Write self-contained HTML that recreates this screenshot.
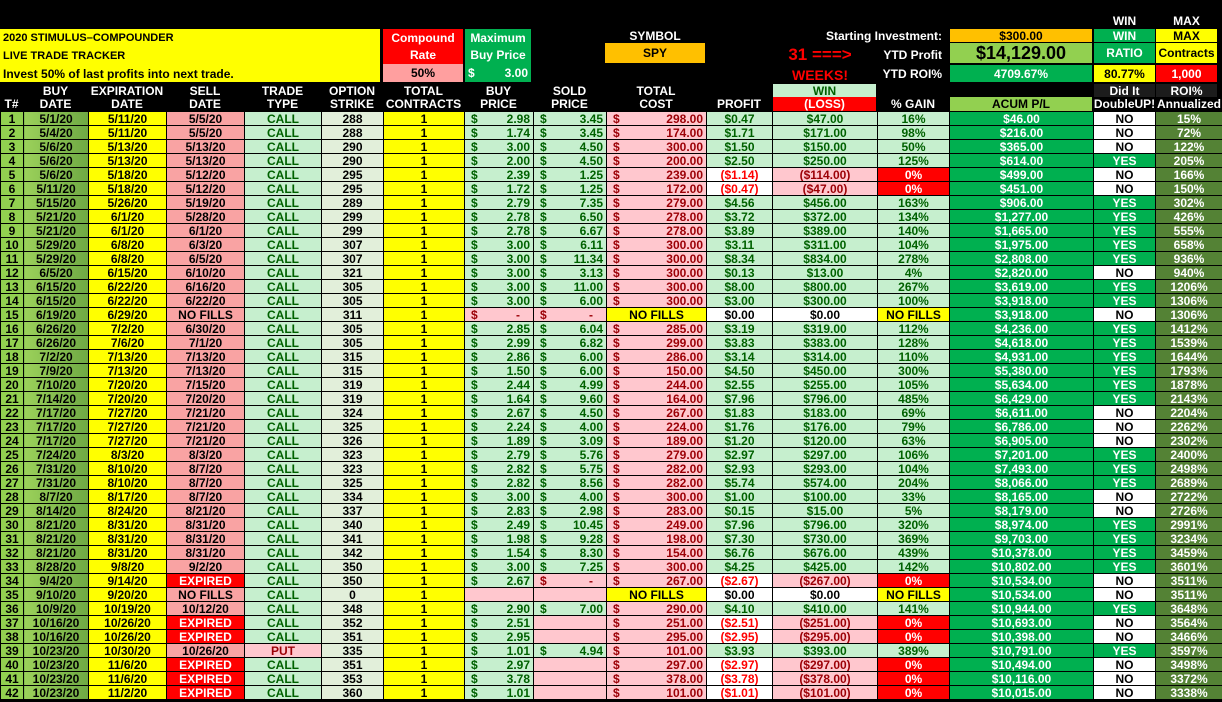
<!DOCTYPE html>
<html><head><meta charset="utf-8"><style>
*{box-sizing:border-box;margin:0;padding:0}
body{width:1222px;height:702px;background:#000;overflow:hidden;position:relative;font-family:"Liberation Sans Narrow","Liberation Sans",sans-serif;font-weight:bold;font-size:12px;color:#000}
.a{position:absolute;display:flex;align-items:center;justify-content:center;white-space:nowrap}
.w{color:#fff}
table{position:absolute;left:0;top:111px;border-collapse:collapse;table-layout:fixed;width:1222px}
td{height:14px;padding:0 3px;border:1px solid #000;text-align:center;line-height:12px;white-space:nowrap;overflow:hidden;font-size:12px}
td i{font-style:normal;float:left;padding-left:3px}
.n{background:#92d050}
.bd{background:linear-gradient(90deg,#9bd15a,#6fa944)}
.ex,.tc{background:#ffff00}
.sd{background:#f9a3a3}
.xp{background:#ff0000;color:#fff}
.ty{background:#c6efce;color:#006100}
.pt{background:#ffc7ce;color:#9c0006}
.st{background:#e2efda}
.g{background:#c6efce;color:#006100;text-align:right}
.gp{background:#ffc7ce;color:#9c0006;text-align:right}
.r{background:#ffc7ce;color:#9c0006;text-align:right}
.pf,.wn,.pg{background:#c6efce;color:#006100}
.np{background:#fff;color:#f00}
.nw{background:#ffc7ce;color:#9c0006}
.z{background:#f00;color:#fff}
.wh{background:#fff;color:#000}
.yf{background:#ffff00;color:#000}
.ac{background:#00b050;color:#fff}
.no{background:#fff}
.ye{background:#00b050;color:#fff}
.roi{background:#548235;color:#fff}
</style></head><body>
<div style="position:absolute;left:0;top:29px;width:380px;height:53px;background:#ffff00"></div>
<div class="a" style="left:3px;top:29px;height:18px;justify-content:flex-start;font-size:11px">2020 STIMULUS–COMPOUNDER</div>
<div class="a" style="left:3px;top:47px;height:18px;justify-content:flex-start;font-size:11px">LIVE TRADE TRACKER</div>
<div class="a" style="left:3px;top:66px;height:16px;justify-content:flex-start;font-size:12px">Invest 50% of last profits into next trade.</div>
<div class="a w" style="left:383px;top:29px;width:80px;height:35px;background:#f00;flex-direction:column;justify-content:space-around">Compound<span>Rate</span></div>
<div class="a" style="left:383px;top:64px;width:80px;height:18px;background:#ff9f9f">50%</div>
<div class="a w" style="left:465px;top:29px;width:66px;height:53px;background:#00b050;flex-direction:column;justify-content:space-around"><span>Maximum</span><span>Buy Price</span><span style="width:60px;display:flex;justify-content:space-between"><span>$</span><span>3.00</span></span></div>
<div class="a w" style="left:605px;top:29px;width:100px;height:14px">SYMBOL</div>
<div class="a" style="left:605px;top:43px;width:100px;height:20px;background:#ffc000">SPY</div>
<div class="a" style="left:770px;top:45px;width:100px;height:20px;color:#f00;font-size:17px">31 ===&gt;</div>
<div class="a" style="left:770px;top:66px;width:100px;height:17px;color:#f00;font-size:14px">WEEKS!</div>
<div class="a w" style="left:800px;top:29px;width:142px;height:14px;justify-content:flex-end">Starting Investment:</div>
<div class="a w" style="left:800px;top:45px;width:142px;height:20px;justify-content:flex-end">YTD Profit</div>
<div class="a w" style="left:800px;top:65px;width:142px;height:17px;justify-content:flex-end">YTD ROI%</div>
<div class="a" style="left:950px;top:29px;width:142px;height:13px;background:#ffc000">$300.00</div>
<div class="a" style="left:950px;top:43px;width:142px;height:20px;background:#92d050;font-size:18px">$14,129.00</div>
<div class="a w" style="left:950px;top:65px;width:142px;height:17px;background:#00b050">4709.67%</div>
<div class="a w" style="left:1094px;top:13px;width:61px;height:15px">WIN</div>
<div class="a w" style="left:1156px;top:13px;width:61px;height:15px">MAX</div>
<div class="a w" style="left:1094px;top:29px;width:61px;height:13px;background:#00b050">WIN</div>
<div class="a w" style="left:1094px;top:43px;width:61px;height:20px;background:#00b050">RATIO</div>
<div class="a" style="left:1094px;top:65px;width:61px;height:17px;background:#ffff00">80.77%</div>
<div class="a" style="left:1156px;top:29px;width:61px;height:13px;background:#ffff00">MAX</div>
<div class="a" style="left:1156px;top:43px;width:61px;height:20px;background:#ffff00">Contracts</div>
<div class="a w" style="left:1156px;top:65px;width:61px;height:17px;background:#f00">1,000</div>
<div class="a w" style="left:0;top:97px;width:23px;height:14px">T#</div>
<div class="a w" style="left:23px;top:84px;width:65px;height:27px;flex-direction:column;line-height:13px">BUY<span>DATE</span></div>
<div class="a w" style="left:88px;top:84px;width:78px;height:27px;flex-direction:column;line-height:13px">EXPIRATION<span>DATE</span></div>
<div class="a w" style="left:166px;top:84px;width:78px;height:27px;flex-direction:column;line-height:13px">SELL<span>DATE</span></div>
<div class="a w" style="left:244px;top:84px;width:77px;height:27px;flex-direction:column;line-height:13px">TRADE<span>TYPE</span></div>
<div class="a w" style="left:321px;top:84px;width:62px;height:27px;flex-direction:column;line-height:13px">OPTION<span>STRIKE</span></div>
<div class="a w" style="left:383px;top:84px;width:81px;height:27px;flex-direction:column;line-height:13px">TOTAL<span>CONTRACTS</span></div>
<div class="a w" style="left:464px;top:84px;width:69px;height:27px;flex-direction:column;line-height:13px">BUY<span>PRICE</span></div>
<div class="a w" style="left:533px;top:84px;width:73px;height:27px;flex-direction:column;line-height:13px">SOLD<span>PRICE</span></div>
<div class="a w" style="left:606px;top:84px;width:100px;height:27px;flex-direction:column;line-height:13px">TOTAL<span>COST</span></div>
<div class="a w" style="left:706px;top:97px;width:66px;height:14px">PROFIT</div>
<div class="a" style="left:773px;top:84px;width:103px;height:13px;background:#c6efce;color:#006100">WIN</div>
<div class="a w" style="left:773px;top:97px;width:103px;height:14px;background:#f00">(LOSS)</div>
<div class="a w" style="left:877px;top:97px;width:72px;height:14px">% GAIN</div>
<div class="a" style="left:950px;top:97px;width:142px;height:14px;background:#92d050">ACUM P/L</div>
<div class="a w" style="left:1094px;top:84px;width:61px;height:13px;background:#1c1c1c">Did It</div>
<div class="a w" style="left:1094px;top:97px;width:61px;height:14px">DoubleUP!</div>
<div class="a w" style="left:1156px;top:84px;width:61px;height:13px;background:#1c1c1c">ROI%</div>
<div class="a w" style="left:1156px;top:97px;width:66px;height:14px">Annualized</div>
<table>
<colgroup><col style="width:23px"><col style="width:65px"><col style="width:78px"><col style="width:78px"><col style="width:77px"><col style="width:62px"><col style="width:81px"><col style="width:69px"><col style="width:73px"><col style="width:100px"><col style="width:66px"><col style="width:105px"><col style="width:72px"><col style="width:144px"><col style="width:62px"><col style="width:67px"></colgroup>
<tr><td class="n">1</td><td class="bd">5/1/20</td><td class="ex">5/11/20</td><td class="sd">5/5/20</td><td class="ty">CALL</td><td class="st">288</td><td class="tc">1</td><td class="g"><i>$</i>2.98</td><td class="g"><i>$</i>3.45</td><td class="r"><i>$</i>298.00</td><td class="pf">$0.47</td><td class="wn">$47.00</td><td class="pg">16%</td><td class="ac">$46.00</td><td class="no">NO</td><td class="roi">15%</td></tr>
<tr><td class="n">2</td><td class="bd">5/4/20</td><td class="ex">5/11/20</td><td class="sd">5/5/20</td><td class="ty">CALL</td><td class="st">288</td><td class="tc">1</td><td class="g"><i>$</i>1.74</td><td class="g"><i>$</i>3.45</td><td class="r"><i>$</i>174.00</td><td class="pf">$1.71</td><td class="wn">$171.00</td><td class="pg">98%</td><td class="ac">$216.00</td><td class="no">NO</td><td class="roi">72%</td></tr>
<tr><td class="n">3</td><td class="bd">5/6/20</td><td class="ex">5/13/20</td><td class="sd">5/13/20</td><td class="ty">CALL</td><td class="st">290</td><td class="tc">1</td><td class="g"><i>$</i>3.00</td><td class="g"><i>$</i>4.50</td><td class="r"><i>$</i>300.00</td><td class="pf">$1.50</td><td class="wn">$150.00</td><td class="pg">50%</td><td class="ac">$365.00</td><td class="no">NO</td><td class="roi">122%</td></tr>
<tr><td class="n">4</td><td class="bd">5/6/20</td><td class="ex">5/13/20</td><td class="sd">5/13/20</td><td class="ty">CALL</td><td class="st">290</td><td class="tc">1</td><td class="g"><i>$</i>2.00</td><td class="g"><i>$</i>4.50</td><td class="r"><i>$</i>200.00</td><td class="pf">$2.50</td><td class="wn">$250.00</td><td class="pg">125%</td><td class="ac">$614.00</td><td class="ye">YES</td><td class="roi">205%</td></tr>
<tr><td class="n">5</td><td class="bd">5/6/20</td><td class="ex">5/18/20</td><td class="sd">5/12/20</td><td class="ty">CALL</td><td class="st">295</td><td class="tc">1</td><td class="g"><i>$</i>2.39</td><td class="g"><i>$</i>1.25</td><td class="r"><i>$</i>239.00</td><td class="np">($1.14)</td><td class="nw">($114.00)</td><td class="z">0%</td><td class="ac">$499.00</td><td class="no">NO</td><td class="roi">166%</td></tr>
<tr><td class="n">6</td><td class="bd">5/11/20</td><td class="ex">5/18/20</td><td class="sd">5/12/20</td><td class="ty">CALL</td><td class="st">295</td><td class="tc">1</td><td class="g"><i>$</i>1.72</td><td class="g"><i>$</i>1.25</td><td class="r"><i>$</i>172.00</td><td class="np">($0.47)</td><td class="nw">($47.00)</td><td class="z">0%</td><td class="ac">$451.00</td><td class="no">NO</td><td class="roi">150%</td></tr>
<tr><td class="n">7</td><td class="bd">5/15/20</td><td class="ex">5/26/20</td><td class="sd">5/19/20</td><td class="ty">CALL</td><td class="st">289</td><td class="tc">1</td><td class="g"><i>$</i>2.79</td><td class="g"><i>$</i>7.35</td><td class="r"><i>$</i>279.00</td><td class="pf">$4.56</td><td class="wn">$456.00</td><td class="pg">163%</td><td class="ac">$906.00</td><td class="ye">YES</td><td class="roi">302%</td></tr>
<tr><td class="n">8</td><td class="bd">5/21/20</td><td class="ex">6/1/20</td><td class="sd">5/28/20</td><td class="ty">CALL</td><td class="st">299</td><td class="tc">1</td><td class="g"><i>$</i>2.78</td><td class="g"><i>$</i>6.50</td><td class="r"><i>$</i>278.00</td><td class="pf">$3.72</td><td class="wn">$372.00</td><td class="pg">134%</td><td class="ac">$1,277.00</td><td class="ye">YES</td><td class="roi">426%</td></tr>
<tr><td class="n">9</td><td class="bd">5/21/20</td><td class="ex">6/1/20</td><td class="sd">6/1/20</td><td class="ty">CALL</td><td class="st">299</td><td class="tc">1</td><td class="g"><i>$</i>2.78</td><td class="g"><i>$</i>6.67</td><td class="r"><i>$</i>278.00</td><td class="pf">$3.89</td><td class="wn">$389.00</td><td class="pg">140%</td><td class="ac">$1,665.00</td><td class="ye">YES</td><td class="roi">555%</td></tr>
<tr><td class="n">10</td><td class="bd">5/29/20</td><td class="ex">6/8/20</td><td class="sd">6/3/20</td><td class="ty">CALL</td><td class="st">307</td><td class="tc">1</td><td class="g"><i>$</i>3.00</td><td class="g"><i>$</i>6.11</td><td class="r"><i>$</i>300.00</td><td class="pf">$3.11</td><td class="wn">$311.00</td><td class="pg">104%</td><td class="ac">$1,975.00</td><td class="ye">YES</td><td class="roi">658%</td></tr>
<tr><td class="n">11</td><td class="bd">5/29/20</td><td class="ex">6/8/20</td><td class="sd">6/5/20</td><td class="ty">CALL</td><td class="st">307</td><td class="tc">1</td><td class="g"><i>$</i>3.00</td><td class="g"><i>$</i>11.34</td><td class="r"><i>$</i>300.00</td><td class="pf">$8.34</td><td class="wn">$834.00</td><td class="pg">278%</td><td class="ac">$2,808.00</td><td class="ye">YES</td><td class="roi">936%</td></tr>
<tr><td class="n">12</td><td class="bd">6/5/20</td><td class="ex">6/15/20</td><td class="sd">6/10/20</td><td class="ty">CALL</td><td class="st">321</td><td class="tc">1</td><td class="g"><i>$</i>3.00</td><td class="g"><i>$</i>3.13</td><td class="r"><i>$</i>300.00</td><td class="pf">$0.13</td><td class="wn">$13.00</td><td class="pg">4%</td><td class="ac">$2,820.00</td><td class="no">NO</td><td class="roi">940%</td></tr>
<tr><td class="n">13</td><td class="bd">6/15/20</td><td class="ex">6/22/20</td><td class="sd">6/16/20</td><td class="ty">CALL</td><td class="st">305</td><td class="tc">1</td><td class="g"><i>$</i>3.00</td><td class="g"><i>$</i>11.00</td><td class="r"><i>$</i>300.00</td><td class="pf">$8.00</td><td class="wn">$800.00</td><td class="pg">267%</td><td class="ac">$3,619.00</td><td class="ye">YES</td><td class="roi">1206%</td></tr>
<tr><td class="n">14</td><td class="bd">6/15/20</td><td class="ex">6/22/20</td><td class="sd">6/22/20</td><td class="ty">CALL</td><td class="st">305</td><td class="tc">1</td><td class="g"><i>$</i>3.00</td><td class="g"><i>$</i>6.00</td><td class="r"><i>$</i>300.00</td><td class="pf">$3.00</td><td class="wn">$300.00</td><td class="pg">100%</td><td class="ac">$3,918.00</td><td class="ye">YES</td><td class="roi">1306%</td></tr>
<tr><td class="n">15</td><td class="bd">6/19/20</td><td class="ex">6/29/20</td><td class="sd">NO FILLS</td><td class="ty">CALL</td><td class="st">311</td><td class="tc">1</td><td class="gp"><i>$</i>-&nbsp;&nbsp;&nbsp;</td><td class="gp"><i>$</i>-&nbsp;&nbsp;&nbsp;</td><td class="yf">NO FILLS</td><td class="wh">$0.00</td><td class="wh">$0.00</td><td class="yf">NO FILLS</td><td class="ac">$3,918.00</td><td class="no">NO</td><td class="roi">1306%</td></tr>
<tr><td class="n">16</td><td class="bd">6/26/20</td><td class="ex">7/2/20</td><td class="sd">6/30/20</td><td class="ty">CALL</td><td class="st">305</td><td class="tc">1</td><td class="g"><i>$</i>2.85</td><td class="g"><i>$</i>6.04</td><td class="r"><i>$</i>285.00</td><td class="pf">$3.19</td><td class="wn">$319.00</td><td class="pg">112%</td><td class="ac">$4,236.00</td><td class="ye">YES</td><td class="roi">1412%</td></tr>
<tr><td class="n">17</td><td class="bd">6/26/20</td><td class="ex">7/6/20</td><td class="sd">7/1/20</td><td class="ty">CALL</td><td class="st">305</td><td class="tc">1</td><td class="g"><i>$</i>2.99</td><td class="g"><i>$</i>6.82</td><td class="r"><i>$</i>299.00</td><td class="pf">$3.83</td><td class="wn">$383.00</td><td class="pg">128%</td><td class="ac">$4,618.00</td><td class="ye">YES</td><td class="roi">1539%</td></tr>
<tr><td class="n">18</td><td class="bd">7/2/20</td><td class="ex">7/13/20</td><td class="sd">7/13/20</td><td class="ty">CALL</td><td class="st">315</td><td class="tc">1</td><td class="g"><i>$</i>2.86</td><td class="g"><i>$</i>6.00</td><td class="r"><i>$</i>286.00</td><td class="pf">$3.14</td><td class="wn">$314.00</td><td class="pg">110%</td><td class="ac">$4,931.00</td><td class="ye">YES</td><td class="roi">1644%</td></tr>
<tr><td class="n">19</td><td class="bd">7/9/20</td><td class="ex">7/13/20</td><td class="sd">7/13/20</td><td class="ty">CALL</td><td class="st">315</td><td class="tc">1</td><td class="g"><i>$</i>1.50</td><td class="g"><i>$</i>6.00</td><td class="r"><i>$</i>150.00</td><td class="pf">$4.50</td><td class="wn">$450.00</td><td class="pg">300%</td><td class="ac">$5,380.00</td><td class="ye">YES</td><td class="roi">1793%</td></tr>
<tr><td class="n">20</td><td class="bd">7/10/20</td><td class="ex">7/20/20</td><td class="sd">7/15/20</td><td class="ty">CALL</td><td class="st">319</td><td class="tc">1</td><td class="g"><i>$</i>2.44</td><td class="g"><i>$</i>4.99</td><td class="r"><i>$</i>244.00</td><td class="pf">$2.55</td><td class="wn">$255.00</td><td class="pg">105%</td><td class="ac">$5,634.00</td><td class="ye">YES</td><td class="roi">1878%</td></tr>
<tr><td class="n">21</td><td class="bd">7/14/20</td><td class="ex">7/20/20</td><td class="sd">7/20/20</td><td class="ty">CALL</td><td class="st">319</td><td class="tc">1</td><td class="g"><i>$</i>1.64</td><td class="g"><i>$</i>9.60</td><td class="r"><i>$</i>164.00</td><td class="pf">$7.96</td><td class="wn">$796.00</td><td class="pg">485%</td><td class="ac">$6,429.00</td><td class="ye">YES</td><td class="roi">2143%</td></tr>
<tr><td class="n">22</td><td class="bd">7/17/20</td><td class="ex">7/27/20</td><td class="sd">7/21/20</td><td class="ty">CALL</td><td class="st">324</td><td class="tc">1</td><td class="g"><i>$</i>2.67</td><td class="g"><i>$</i>4.50</td><td class="r"><i>$</i>267.00</td><td class="pf">$1.83</td><td class="wn">$183.00</td><td class="pg">69%</td><td class="ac">$6,611.00</td><td class="no">NO</td><td class="roi">2204%</td></tr>
<tr><td class="n">23</td><td class="bd">7/17/20</td><td class="ex">7/27/20</td><td class="sd">7/21/20</td><td class="ty">CALL</td><td class="st">325</td><td class="tc">1</td><td class="g"><i>$</i>2.24</td><td class="g"><i>$</i>4.00</td><td class="r"><i>$</i>224.00</td><td class="pf">$1.76</td><td class="wn">$176.00</td><td class="pg">79%</td><td class="ac">$6,786.00</td><td class="no">NO</td><td class="roi">2262%</td></tr>
<tr><td class="n">24</td><td class="bd">7/17/20</td><td class="ex">7/27/20</td><td class="sd">7/21/20</td><td class="ty">CALL</td><td class="st">326</td><td class="tc">1</td><td class="g"><i>$</i>1.89</td><td class="g"><i>$</i>3.09</td><td class="r"><i>$</i>189.00</td><td class="pf">$1.20</td><td class="wn">$120.00</td><td class="pg">63%</td><td class="ac">$6,905.00</td><td class="no">NO</td><td class="roi">2302%</td></tr>
<tr><td class="n">25</td><td class="bd">7/24/20</td><td class="ex">8/3/20</td><td class="sd">8/3/20</td><td class="ty">CALL</td><td class="st">323</td><td class="tc">1</td><td class="g"><i>$</i>2.79</td><td class="g"><i>$</i>5.76</td><td class="r"><i>$</i>279.00</td><td class="pf">$2.97</td><td class="wn">$297.00</td><td class="pg">106%</td><td class="ac">$7,201.00</td><td class="ye">YES</td><td class="roi">2400%</td></tr>
<tr><td class="n">26</td><td class="bd">7/31/20</td><td class="ex">8/10/20</td><td class="sd">8/7/20</td><td class="ty">CALL</td><td class="st">323</td><td class="tc">1</td><td class="g"><i>$</i>2.82</td><td class="g"><i>$</i>5.75</td><td class="r"><i>$</i>282.00</td><td class="pf">$2.93</td><td class="wn">$293.00</td><td class="pg">104%</td><td class="ac">$7,493.00</td><td class="ye">YES</td><td class="roi">2498%</td></tr>
<tr><td class="n">27</td><td class="bd">7/31/20</td><td class="ex">8/10/20</td><td class="sd">8/7/20</td><td class="ty">CALL</td><td class="st">325</td><td class="tc">1</td><td class="g"><i>$</i>2.82</td><td class="g"><i>$</i>8.56</td><td class="r"><i>$</i>282.00</td><td class="pf">$5.74</td><td class="wn">$574.00</td><td class="pg">204%</td><td class="ac">$8,066.00</td><td class="ye">YES</td><td class="roi">2689%</td></tr>
<tr><td class="n">28</td><td class="bd">8/7/20</td><td class="ex">8/17/20</td><td class="sd">8/7/20</td><td class="ty">CALL</td><td class="st">334</td><td class="tc">1</td><td class="g"><i>$</i>3.00</td><td class="g"><i>$</i>4.00</td><td class="r"><i>$</i>300.00</td><td class="pf">$1.00</td><td class="wn">$100.00</td><td class="pg">33%</td><td class="ac">$8,165.00</td><td class="no">NO</td><td class="roi">2722%</td></tr>
<tr><td class="n">29</td><td class="bd">8/14/20</td><td class="ex">8/24/20</td><td class="sd">8/21/20</td><td class="ty">CALL</td><td class="st">337</td><td class="tc">1</td><td class="g"><i>$</i>2.83</td><td class="g"><i>$</i>2.98</td><td class="r"><i>$</i>283.00</td><td class="pf">$0.15</td><td class="wn">$15.00</td><td class="pg">5%</td><td class="ac">$8,179.00</td><td class="no">NO</td><td class="roi">2726%</td></tr>
<tr><td class="n">30</td><td class="bd">8/21/20</td><td class="ex">8/31/20</td><td class="sd">8/31/20</td><td class="ty">CALL</td><td class="st">340</td><td class="tc">1</td><td class="g"><i>$</i>2.49</td><td class="g"><i>$</i>10.45</td><td class="r"><i>$</i>249.00</td><td class="pf">$7.96</td><td class="wn">$796.00</td><td class="pg">320%</td><td class="ac">$8,974.00</td><td class="ye">YES</td><td class="roi">2991%</td></tr>
<tr><td class="n">31</td><td class="bd">8/21/20</td><td class="ex">8/31/20</td><td class="sd">8/31/20</td><td class="ty">CALL</td><td class="st">341</td><td class="tc">1</td><td class="g"><i>$</i>1.98</td><td class="g"><i>$</i>9.28</td><td class="r"><i>$</i>198.00</td><td class="pf">$7.30</td><td class="wn">$730.00</td><td class="pg">369%</td><td class="ac">$9,703.00</td><td class="ye">YES</td><td class="roi">3234%</td></tr>
<tr><td class="n">32</td><td class="bd">8/21/20</td><td class="ex">8/31/20</td><td class="sd">8/31/20</td><td class="ty">CALL</td><td class="st">342</td><td class="tc">1</td><td class="g"><i>$</i>1.54</td><td class="g"><i>$</i>8.30</td><td class="r"><i>$</i>154.00</td><td class="pf">$6.76</td><td class="wn">$676.00</td><td class="pg">439%</td><td class="ac">$10,378.00</td><td class="ye">YES</td><td class="roi">3459%</td></tr>
<tr><td class="n">33</td><td class="bd">8/28/20</td><td class="ex">9/8/20</td><td class="sd">9/2/20</td><td class="ty">CALL</td><td class="st">350</td><td class="tc">1</td><td class="g"><i>$</i>3.00</td><td class="g"><i>$</i>7.25</td><td class="r"><i>$</i>300.00</td><td class="pf">$4.25</td><td class="wn">$425.00</td><td class="pg">142%</td><td class="ac">$10,802.00</td><td class="ye">YES</td><td class="roi">3601%</td></tr>
<tr><td class="n">34</td><td class="bd">9/4/20</td><td class="ex">9/14/20</td><td class="xp">EXPIRED</td><td class="ty">CALL</td><td class="st">350</td><td class="tc">1</td><td class="g"><i>$</i>2.67</td><td class="gp"><i>$</i>-&nbsp;&nbsp;&nbsp;</td><td class="r"><i>$</i>267.00</td><td class="np">($2.67)</td><td class="nw">($267.00)</td><td class="z">0%</td><td class="ac">$10,534.00</td><td class="no">NO</td><td class="roi">3511%</td></tr>
<tr><td class="n">35</td><td class="bd">9/10/20</td><td class="ex">9/20/20</td><td class="sd">NO FILLS</td><td class="ty">CALL</td><td class="st">0</td><td class="tc">1</td><td class="gp"></td><td class="gp"></td><td class="yf">NO FILLS</td><td class="wh">$0.00</td><td class="wh">$0.00</td><td class="yf">NO FILLS</td><td class="ac">$10,534.00</td><td class="no">NO</td><td class="roi">3511%</td></tr>
<tr><td class="n">36</td><td class="bd">10/9/20</td><td class="ex">10/19/20</td><td class="sd">10/12/20</td><td class="ty">CALL</td><td class="st">348</td><td class="tc">1</td><td class="g"><i>$</i>2.90</td><td class="g"><i>$</i>7.00</td><td class="r"><i>$</i>290.00</td><td class="pf">$4.10</td><td class="wn">$410.00</td><td class="pg">141%</td><td class="ac">$10,944.00</td><td class="ye">YES</td><td class="roi">3648%</td></tr>
<tr><td class="n">37</td><td class="bd">10/16/20</td><td class="ex">10/26/20</td><td class="xp">EXPIRED</td><td class="ty">CALL</td><td class="st">352</td><td class="tc">1</td><td class="g"><i>$</i>2.51</td><td class="gp"></td><td class="r"><i>$</i>251.00</td><td class="np">($2.51)</td><td class="nw">($251.00)</td><td class="z">0%</td><td class="ac">$10,693.00</td><td class="no">NO</td><td class="roi">3564%</td></tr>
<tr><td class="n">38</td><td class="bd">10/16/20</td><td class="ex">10/26/20</td><td class="xp">EXPIRED</td><td class="ty">CALL</td><td class="st">351</td><td class="tc">1</td><td class="g"><i>$</i>2.95</td><td class="gp"></td><td class="r"><i>$</i>295.00</td><td class="np">($2.95)</td><td class="nw">($295.00)</td><td class="z">0%</td><td class="ac">$10,398.00</td><td class="no">NO</td><td class="roi">3466%</td></tr>
<tr><td class="n">39</td><td class="bd">10/23/20</td><td class="ex">10/30/20</td><td class="sd">10/26/20</td><td class="pt">PUT</td><td class="st">335</td><td class="tc">1</td><td class="g"><i>$</i>1.01</td><td class="g"><i>$</i>4.94</td><td class="r"><i>$</i>101.00</td><td class="pf">$3.93</td><td class="wn">$393.00</td><td class="pg">389%</td><td class="ac">$10,791.00</td><td class="ye">YES</td><td class="roi">3597%</td></tr>
<tr><td class="n">40</td><td class="bd">10/23/20</td><td class="ex">11/6/20</td><td class="xp">EXPIRED</td><td class="ty">CALL</td><td class="st">351</td><td class="tc">1</td><td class="g"><i>$</i>2.97</td><td class="gp"></td><td class="r"><i>$</i>297.00</td><td class="np">($2.97)</td><td class="nw">($297.00)</td><td class="z">0%</td><td class="ac">$10,494.00</td><td class="no">NO</td><td class="roi">3498%</td></tr>
<tr><td class="n">41</td><td class="bd">10/23/20</td><td class="ex">11/6/20</td><td class="xp">EXPIRED</td><td class="ty">CALL</td><td class="st">353</td><td class="tc">1</td><td class="g"><i>$</i>3.78</td><td class="gp"></td><td class="r"><i>$</i>378.00</td><td class="np">($3.78)</td><td class="nw">($378.00)</td><td class="z">0%</td><td class="ac">$10,116.00</td><td class="no">NO</td><td class="roi">3372%</td></tr>
<tr><td class="n">42</td><td class="bd">10/23/20</td><td class="ex">11/2/20</td><td class="xp">EXPIRED</td><td class="ty">CALL</td><td class="st">360</td><td class="tc">1</td><td class="g"><i>$</i>1.01</td><td class="gp"></td><td class="r"><i>$</i>101.00</td><td class="np">($1.01)</td><td class="nw">($101.00)</td><td class="z">0%</td><td class="ac">$10,015.00</td><td class="no">NO</td><td class="roi">3338%</td></tr>
</table>
</body></html>
